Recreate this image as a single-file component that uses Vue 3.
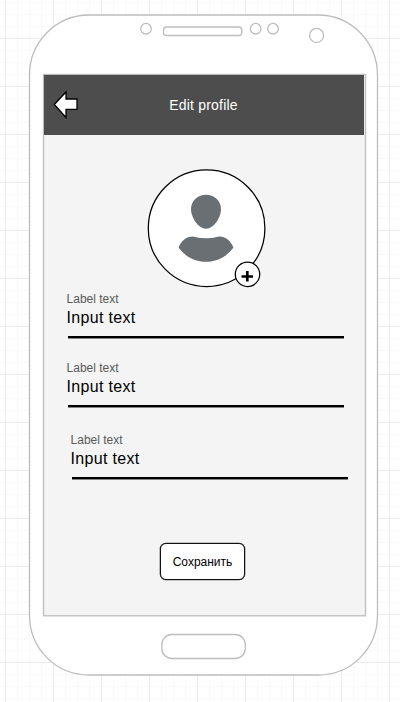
<script setup>
const fields = [
  { label: 'Label text', value: 'Input text' },
  { label: 'Label text', value: 'Input text' },
  { label: 'Label text', value: 'Input text', shifted: true },
]
</script>

<template>
  <main class="canvas">
    <svg class="device" width="400" height="702" viewBox="0 0 400 702" fill="#fff" stroke="#bdbdbd" stroke-width="1.3">
      <path d="M89.500 15H318C352 15 377.500 43 377.500 75V615C377.500 648 352 675 318 675H89.500C55 675 29.500 648 29.500 615V75C29.500 43 55 15 89.500 15Z" />
      <circle cx="146" cy="28.700" r="5.300" />
      <rect x="163.500" y="27" width="78.300" height="8.500" rx="3" />
      <circle cx="255.700" cy="28.700" r="5.300" />
      <circle cx="273" cy="28.700" r="5.300" />
      <circle cx="316.600" cy="35.400" r="7" />
      <rect x="161.800" y="634.500" width="83.500" height="24" rx="10" />
      <rect x="43.500" y="74.500" width="322" height="541.300" fill="#f4f4f4" />
    </svg>
    <div class="screen">
      <header class="bar">
        <svg class="back" width="28" height="32" viewBox="0 0 28 32">
          <path d="M2.300 15.500L14 3V10H25V20.300H14V28.500Z" fill="#fff" stroke="#000" stroke-width="1.3" />
        </svg>
        <h1>Edit profile</h1>
      </header>
      <div class="avatar">
        <svg width="120" height="120" viewBox="0 0 120 120">
          <circle cx="59.600" cy="59.200" r="58.300" fill="#fff" stroke="#000" stroke-width="1.25" />
          <path d="M59 25.700C67 25.700 74 31.200 74 40.200C74 48 67 59.700 59 59.700S44 48 44 40.200C44 31.200 51 25.700 59 25.700Z" fill="#6a6f73" />
          <path d="M31.600 78.500C34.500 71 41 66.500 47 67.700C55 69.800 63 69.800 71 67.700C77 66.500 83.500 71 86.400 78.500C81 86.500 71 92.800 59 92.800S37 86.500 31.600 78.500Z" fill="#6a6f73" />
          <circle cx="100.500" cy="105.300" r="12.200" fill="#fff" stroke="#000" stroke-width="1.25" />
          <path d="M94.500 107.500H106M100.300 102V112.500" fill="none" stroke="#000" stroke-width="2.700" />
        </svg>
      </div>
      <section class="fields">
        <div v-for="(field, i) in fields" :key="i" class="field" :class="{ shifted: field.shifted }">
          <span class="label">{{ field.label }}</span>
          <span class="value">{{ field.value }}</span>
          <span class="line"></span>
        </div>
      </section>
      <button class="save">Сохранить</button>
    </div>
  </main>
</template>

<style>
body {
  margin: 0;
}
</style>

<style scoped>
.canvas {
  display: grid;
  width: 400px;
  height: 702px;
  overflow: hidden;
  font-family: "Liberation Sans", Arial, sans-serif;
  background-color: #fff;
  background-image:
    linear-gradient(90deg, #ebebeb 1px, transparent 1px),
    linear-gradient(#ebebeb 1px, transparent 1px),
    linear-gradient(90deg, #f9f9f9 1px, transparent 1px),
    linear-gradient(#f9f9f9 1px, transparent 1px);
  background-size: 48px 48px, 48px 48px, 12px 12px, 12px 12px;
  background-position: 5px 38px, 5px 38px, 5px 2px, 5px 2px;
}
.device,
.screen {
  grid-area: 1 / 1;
}
.device {
  display: block;
}
.screen {
  display: flex;
  flex-direction: column;
  width: 320px;
  height: 540px;
  margin: 75px 0 0 44px;
}
.bar {
  display: grid;
  grid-template-columns: 36px 1fr 36px;
  align-items: center;
  height: 60px;
  background: #4d4d4d;
}
.back {
  margin-left: 8px;
}
h1 {
  margin: 0 1px 0 0;
  font-size: 14px;
  font-weight: 400;
  line-height: 16px;
  letter-spacing: 0.2px;
  text-align: center;
  color: #fff;
}
.avatar {
  height: 120px;
  margin: 34px 0 0 103px;
}
.fields {
  padding: 3px 20px 0 22.6px;
}
.field {
  display: flex;
  flex-direction: column;
  height: 69px;
}
.shifted {
  margin: 3px -4px 0 4px;
}
.label {
  font-size: 12px;
  line-height: 14px;
  color: #5a5a5a;
}
.value {
  margin-top: 2px;
  font-size: 16px;
  line-height: 20px;
  letter-spacing: 0.32px;
  color: #000;
}
.line {
  height: 2px;
  margin: 8px 0 0 1.4px;
  background: #000;
  border-bottom: 1px solid #858585;
}
.save {
  width: 85px;
  height: 37px;
  margin: 41px 0 0 116px;
  padding: 0;
  font: 12px "Liberation Sans", Arial, sans-serif;
  color: #000;
  background: #fff;
  border: 1px solid #111;
  border-radius: 6px;
  box-shadow: 0 0 0 0.3px #333;
}
</style>
